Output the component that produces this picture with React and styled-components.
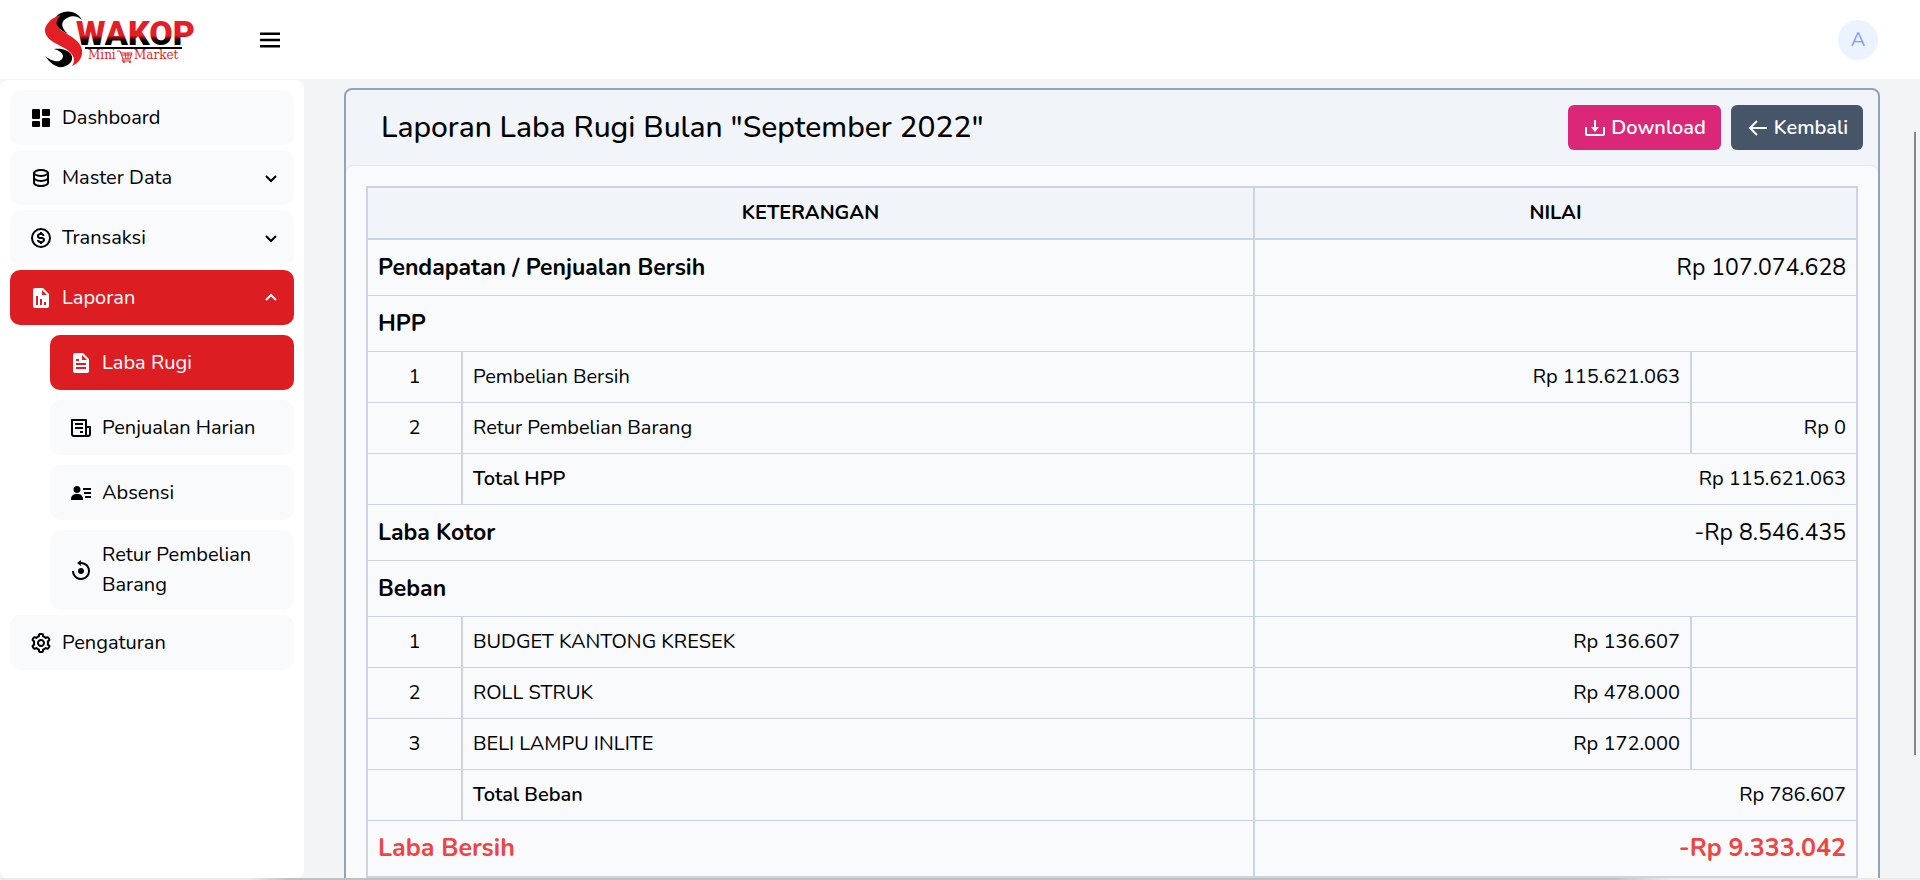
import React from "react";
import styled, { createGlobalStyle, css } from "styled-components";
import {
  BiSolidDashboard, BiData, BiDollarCircle, BiSolidReport, BiSolidFile,
  BiSolidUserDetail, BiReset, BiCog, BiChevronDown, BiChevronUp, BiMenu,
  BiDownload, BiArrowBack,
} from "react-icons/bi";

const GlobalStyle = createGlobalStyle`
  *, *::before, *::after { box-sizing: border-box; }
  body {
    margin: 0;
    background: #f3f4f6;
    color: #000;
    font: 400 20px/30px Nunito, "Open Sans", sans-serif;
  }
  button { font: inherit; border: 0; cursor: pointer; }
`;

const Page = styled.div`
  height: 100vh;
  display: flex;
  flex-direction: column;
  overflow: hidden;
`;

const TopBar = styled.header`
  display: flex;
  align-items: center;
  flex: none;
  height: 79px;
  padding: 0 42px 0 40px;
  background: #fff;
`;

const MenuButton = styled.button`
  display: flex;
  margin-left: 55px;
  padding: 0;
  background: none;
  color: #000;
`;

const Avatar = styled.button`
  width: 40px;
  height: 40px;
  margin-left: auto;
  padding: 0;
  border-radius: 50%;
  background: #ebf3ff;
  color: #8199f8;
`;

const Body = styled.div`
  position: relative;
  display: flex;
  flex: 1;
  min-height: 0;
`;

const Sidebar = styled.nav`
  flex: none;
  width: 304px;
  margin-top: 1px;
  padding: 10px;
  border-radius: 8px;
  background: #fff;
`;

const NavList = styled.ul`
  display: flex;
  flex-direction: column;
  gap: 5px;
  margin: 0;
  padding: 0;
  list-style: none;
`;

const SubList = styled(NavList)`
  gap: 10px;
  padding: 10px 0 0 40px;
`;

const NavLink = styled.a`
  display: flex;
  align-items: center;
  gap: 9px;
  min-height: 55px;
  padding: 10px 11px 10px 19px;
  border-radius: 10px;
  background: ${(p) => (p.$active ? "#dc1e23" : "#f8fafc")};
  color: ${(p) => (p.$active ? "#fff" : "#000")};
  text-decoration: none;
  svg { flex: none; }
`;

const NavLabel = styled.span`
  flex: 1;
`;

const Main = styled.main`
  flex: 1;
  min-width: 0;
  padding: 9px 40px 0;
  overflow: hidden;
`;

const Card = styled.section`
  border: 2px solid #94a3b8;
  border-radius: 8px;
  background: #f1f5f9;
`;

const CardHeader = styled.div`
  display: flex;
  align-items: center;
  gap: 10px;
  padding: 15px 15px 15px 35px;
`;

const Title = styled.h1`
  flex: 1;
  margin: 0;
  font-size: 30px;
  font-weight: 500;
  line-height: 40px;
`;

const ActionButton = styled.button`
  display: flex;
  align-items: center;
  gap: 4px;
  height: 45px;
  padding: 0 15px;
  border-radius: 6px;
  background: ${(p) => p.$color};
  color: #fff;
  && { font-weight: 600; }
`;

const CardBody = styled.div`
  padding: 20px;
  border-top: 1px solid #e2e8f0;
  border-radius: 8px;
  background: #f8fafc;
`;

const Table = styled.table`
  width: 100%;
  table-layout: fixed;
  border-collapse: collapse;
  border: 2px solid #cbd5e1;
`;

const NumberCol = styled.col`width: 95px;`;
const DebitCol = styled.col`width: 437px;`;
const CreditCol = styled.col`width: 166px;`;

const HeadCell = styled.th`
  padding: 10px;
  border: 2px solid #cbd5e1;
  background: #f1f5f9;
  font-weight: 700;
`;

const emphasis = {
  section: css`font-size: 23px; line-height: 35px;`,
  result: css`font-size: 25px; line-height: 35px; font-weight: 700; color: #ef4444;`,
};

const Row = styled.tr`
  border-bottom: 1px solid #cbd5e1;
  ${(p) => emphasis[p.$kind]}
`;

const Cell = styled.td`
  height: 51px;
  padding: 10px;
  border-right: 2px solid #cbd5e1;
  text-align: ${(p) => p.$align || "left"};
  font-weight: ${(p) => p.$weight || "inherit"};
`;

const ScrollThumb = styled.div`
  position: absolute;
  top: 53px;
  right: 4px;
  width: 2px;
  height: 78%;
  background: #888;
`;

const BottomEdge = styled.div`
  flex: none;
  height: 2px;
  background: linear-gradient(90deg, #ebebeb 0 13%, #c0c0c0 15% 84%, #ebebeb 87%);
`;

function Logo() {
  return (
    <svg width="160" height="70" viewBox="40 4 160 70" role="img" aria-label="Swakop Mini Market">
      <defs>
        <linearGradient id="word" x1="0" y1="21" x2="0" y2="44" gradientUnits="userSpaceOnUse">
          <stop offset="0" stopColor="#e31e24" />
          <stop offset="0.58" stopColor="#e31e24" />
          <stop offset="0.82" stopColor="#000" />
        </linearGradient>
      </defs>
      <path fill="#000" d="M82 19C79 12 70 9 64 11C55 13 53 20 57 25C60 29 64 31 68 33C60 26 61 20 67 17C72 14 78 15 82 19Z" />
      <path fill="#e31e24" d="M61 14C50 17 44 25 45 31C47 40 58 43 66 48C74 53 76 59 72 65C79 62 83 56 82 49C80 39 71 36 64 31C57 27 53 22 61 14Z" />
      <path fill="#000" d="M45 55C50 62 56 67 63 66C71 64 74 58 71 53C68 49 61 47 54 48C61 50 65 54 62 58C58 63 50 59 45 55Z" />
      <text x="76" y="44" fontFamily="Roboto, sans-serif" fontWeight="900" fontSize="34" fill="url(#word)">WAKOP</text>
      <rect x="85" y="46" width="97" height="2" fill="#000" />
      <g fill="#e31e24" fontFamily="'DejaVu Serif', serif" fontSize="12">
        <text x="88" y="58">Mini</text>
        <text x="134" y="58">Market</text>
      </g>
      <path fill="none" stroke="#e31e24" strokeWidth="1" d="M117 50H120L123 58H130L132 52H121M122 54H131M125 52L126 58M128 52V58M123 58L122 60H131" />
      <circle cx="124" cy="61" r="1" fill="#e31e24" />
      <circle cx="130" cy="61" r="1" fill="#e31e24" />
    </svg>
  );
}

function NewsIcon({ size }) {
  return (
    <svg width={size} height={size} viewBox="0 0 24 24" fill="none" stroke="currentColor" strokeWidth="2">
      <path d="M17 20H5a2 2 0 0 1-2-2V4h14v14a2 2 0 0 0 4 0v-7h-4" strokeLinejoin="round" />
      <path d="M17 20h2M6 8h8M6 12h8M11 16h3" />
    </svg>
  );
}

const NAV = [
  { label: "Dashboard", icon: BiSolidDashboard },
  { label: "Master Data", icon: BiData, chevron: BiChevronDown },
  { label: "Transaksi", icon: BiDollarCircle, chevron: BiChevronDown },
  {
    label: "Laporan",
    icon: BiSolidReport,
    chevron: BiChevronUp,
    active: true,
    children: [
      { label: "Laba Rugi", icon: BiSolidFile, active: true },
      { label: "Penjualan Harian", icon: NewsIcon },
      { label: "Absensi", icon: BiSolidUserDetail },
      { label: "Retur Pembelian Barang", icon: BiReset },
    ],
  },
  { label: "Pengaturan", icon: BiCog },
];

const ROWS = [
  { kind: "section", name: "Pendapatan / Penjualan Bersih", total: "Rp 107.074.628" },
  { kind: "section", name: "HPP", total: "" },
  { kind: "item", no: 1, name: "Pembelian Bersih", debit: "Rp 115.621.063" },
  { kind: "item", no: 2, name: "Retur Pembelian Barang", credit: "Rp 0" },
  { kind: "total", name: "Total HPP", total: "Rp 115.621.063" },
  { kind: "section", name: "Laba Kotor", total: "-Rp 8.546.435" },
  { kind: "section", name: "Beban", total: "" },
  { kind: "item", no: 1, name: "BUDGET KANTONG KRESEK", debit: "Rp 136.607" },
  { kind: "item", no: 2, name: "ROLL STRUK", debit: "Rp 478.000" },
  { kind: "item", no: 3, name: "BELI LAMPU INLITE", debit: "Rp 172.000" },
  { kind: "total", name: "Total Beban", total: "Rp 786.607" },
  { kind: "result", name: "Laba Bersih", total: "-Rp 9.333.042" },
];

const NAME_WEIGHT = { item: 400, total: 600, section: 700, result: 700 };

function NavItem({ item }) {
  const Icon = item.icon;
  const Chevron = item.chevron;
  return (
    <li>
      <NavLink href="#" $active={item.active}>
        <Icon size={24} />
        <NavLabel>{item.label}</NavLabel>
        {Chevron && <Chevron size={24} />}
      </NavLink>
      {item.children && (
        <SubList>
          {item.children.map((child) => <NavItem key={child.label} item={child} />)}
        </SubList>
      )}
    </li>
  );
}

function ReportRow({ row }) {
  const nested = row.kind === "item" || row.kind === "total";
  return (
    <Row $kind={row.kind}>
      {nested && <Cell $align="center">{row.no}</Cell>}
      <Cell colSpan={nested ? 1 : 2} $weight={NAME_WEIGHT[row.kind]}>{row.name}</Cell>
      {row.kind === "item" ? (
        <>
          <Cell $align="right">{row.debit}</Cell>
          <Cell $align="right">{row.credit}</Cell>
        </>
      ) : (
        <Cell colSpan={2} $align="right">{row.total}</Cell>
      )}
    </Row>
  );
}

export default function App() {
  return (
    <Page>
      <GlobalStyle />
      <TopBar>
        <Logo />
        <MenuButton aria-label="Menu"><BiMenu size={30} /></MenuButton>
        <Avatar>A</Avatar>
      </TopBar>
      <Body>
        <Sidebar>
          <NavList>
            {NAV.map((item) => <NavItem key={item.label} item={item} />)}
          </NavList>
        </Sidebar>
        <Main>
          <Card>
            <CardHeader>
              <Title>Laporan Laba Rugi Bulan "September 2022"</Title>
              <ActionButton $color="#db2777"><BiDownload size={24} />Download</ActionButton>
              <ActionButton $color="#475569"><BiArrowBack size={24} />Kembali</ActionButton>
            </CardHeader>
            <CardBody>
              <Table>
                <colgroup>
                  <NumberCol />
                  <col />
                  <DebitCol />
                  <CreditCol />
                </colgroup>
                <thead>
                  <tr>
                    <HeadCell colSpan={2}>KETERANGAN</HeadCell>
                    <HeadCell colSpan={2}>NILAI</HeadCell>
                  </tr>
                </thead>
                <tbody>
                  {ROWS.map((row, i) => <ReportRow key={i} row={row} />)}
                </tbody>
              </Table>
            </CardBody>
          </Card>
        </Main>
        <ScrollThumb />
      </Body>
      <BottomEdge />
    </Page>
  );
}
